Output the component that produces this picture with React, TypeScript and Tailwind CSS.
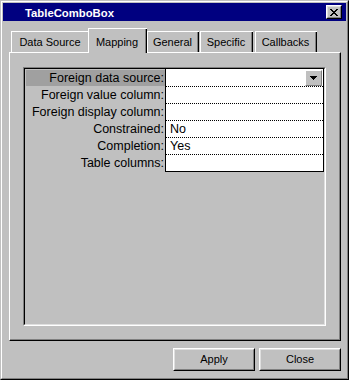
const rows = [
  { label: 'Foreign data source:', value: '', combo: true },
  { label: 'Foreign value column:', value: '' },
  { label: 'Foreign display column:', value: '' },
  { label: 'Constrained:', value: 'No' },
  { label: 'Completion:', value: 'Yes' },
  { label: 'Table columns:', value: '' },
];

function Tab({ label, width, selected }: { label: string; width: string; selected?: boolean }) {
  if (selected) {
    // selected tab sits 3px higher and overlaps the neighbour on its left
    return (
      <div className={`relative z-10 -ml-[2px] h-[25px] border-l border-t border-white bg-[#c0c0c0] ${width}`}>
        <div className="h-full border-r border-black">
          <div className="h-full border-r border-[#808080] pt-[7px] text-center leading-[13px]">{label}</div>
        </div>
      </div>
    );
  }
  return (
    <div className={`mb-[1px] h-[21px] border-l border-t border-white ${width}`}>
      <div className="h-full border-r border-black">
        <div className="h-full border-r border-[#808080] pt-[4px] text-center leading-[13px]">{label}</div>
      </div>
    </div>
  );
}

function Button({ label }: { label: string }) {
  return (
    <div className="h-[23px] w-[82px] border border-t-white border-l-white border-r-black border-b-black">
      <div className="flex h-full items-center justify-center border border-t-[#dfdfdf] border-l-[#dfdfdf] border-r-[#808080] border-b-[#808080] leading-[13px]">
        {label}
      </div>
    </div>
  );
}

export default function App() {
  return (
    <div className="h-[380px] w-[349px] border border-t-[#c0c0c0] border-l-[#c0c0c0] border-r-black border-b-black bg-[#c0c0c0] font-['Liberation_Sans',Arial,sans-serif] text-[11px] text-black">
      <div className="h-full border border-t-white border-l-white border-r-[#808080] border-b-[#808080] p-[1px]">
        {/* Title bar */}
        <div className="flex h-[18px] items-start justify-between bg-[#000080] pl-[22px] pr-[4px]">
          <span className="pt-[4px] text-[11.3px] font-bold leading-[13px] text-white">TableComboBox</span>
          <div className="mt-[2px] h-[14px] w-[16px] border border-t-white border-l-white border-r-black border-b-black">
            <div className="flex h-full items-center justify-center border border-t-[#dfdfdf] border-l-[#dfdfdf] border-r-[#808080] border-b-[#808080] bg-[#c0c0c0]">
              <svg width="8" height="7" viewBox="0 0 8 7" shapeRendering="crispEdges" fill="#000">
                <rect x="0" y="0" width="2" height="1" />
                <rect x="6" y="0" width="2" height="1" />
                <rect x="1" y="1" width="2" height="1" />
                <rect x="5" y="1" width="2" height="1" />
                <rect x="2" y="2" width="4" height="1" />
                <rect x="3" y="3" width="2" height="1" />
                <rect x="2" y="4" width="4" height="1" />
                <rect x="1" y="5" width="2" height="1" />
                <rect x="5" y="5" width="2" height="1" />
                <rect x="0" y="6" width="2" height="1" />
                <rect x="6" y="6" width="2" height="1" />
              </svg>
            </div>
          </div>
        </div>

        <div className="pl-[6px] pr-[5px]">
          {/* Tabs */}
          <div className="mt-[7px] flex h-[25px] items-end pl-[2px]">
            <Tab label="Data Source" width="w-[79px]" />
            <Tab label="Mapping" width="w-[59px]" selected />
            <Tab label="General" width="w-[52px]" />
            <div className="w-[1px]" />
            <Tab label="Specific" width="w-[53px]" />
            <div className="w-[2px]" />
            <Tab label="Callbacks" width="w-[62px]" />
          </div>

          {/* Tab panel */}
          <div className="-mt-[1px] h-[289px] border border-t-white border-l-white border-r-black border-b-black">
            <div className="h-full border-r border-b border-[#808080] pl-[13px] pt-[14px]">
              <div className="h-[259px] w-[303px] border border-t-[#808080] border-l-[#808080] border-r-white border-b-white">
                <div className="h-full border border-t-black border-l-black border-r-[#dfdfdf] border-b-[#dfdfdf]">
                  <div className="flex text-[12.5px] leading-[16px]">
                    <div className="w-[140px] pt-[1px]">
                      {rows.map((r, i) => (
                        <div
                          key={r.label}
                          className={`mb-[1px] ml-[1px] h-[16px] pr-[1px] text-right ${i === 0 ? 'bg-[#a0a0a0]' : ''}`}
                        >
                          {r.label}
                        </div>
                      ))}
                    </div>
                    <div className="w-[159px] border-r border-l border-b border-black bg-white pt-[1px]">
                      {rows.map((r, i) => (
                        <div
                          key={r.label}
                          className={
                            i < rows.length - 1
                              ? 'flex h-[17px] border-b border-dotted border-black'
                              : 'flex h-[15px]'
                          }
                        >
                          <span className="flex-1 pl-[4px]">{r.value}</span>
                          {r.combo && (
                            <div className="mr-[1px] h-[16px] w-[17px] border border-t-white border-l-white border-r-[#808080] border-b-[#808080] bg-[#c0c0c0]">
                              <div className="flex h-full items-center justify-center">
                                <svg width="7" height="4" viewBox="0 0 7 4" shapeRendering="crispEdges">
                                  <path d="M0 0h7L3.5 4z" fill="#000" />
                                </svg>
                              </div>
                            </div>
                          )}
                        </div>
                      ))}
                    </div>
                  </div>
                </div>
              </div>
            </div>
          </div>

          {/* Buttons */}
          <div className="mt-[7px] flex justify-end gap-[4px]">
            <Button label="Apply" />
            <Button label="Close" />
          </div>
        </div>
      </div>
    </div>
  );
}
